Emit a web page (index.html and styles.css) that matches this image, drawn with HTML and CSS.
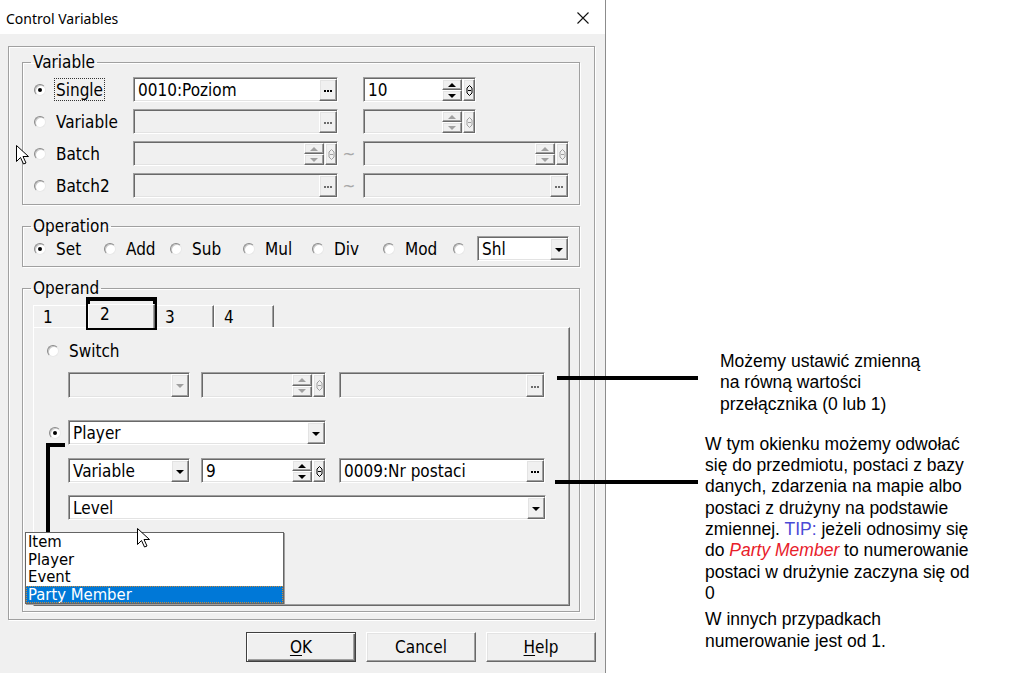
FILE: index.html
```html
<!DOCTYPE html>
<html lang="pl">
<head>
    <meta charset="UTF-8">
    <meta name="viewport" content="width=device-width, initial-scale=1.0">
    <title>Control Variables</title>
    <link rel="stylesheet" href="styles.css">
</head>
<body>
<div class="page">
    <div class="window">
        <div class="titlebar">
            <span class="title">Control Variables</span>
            <svg class="close" width="12" height="12" viewBox="0 0 12 12"><path d="M0.5 0.5L11.5 11.5M11.5 0.5L0.5 11.5" stroke="#111" stroke-width="1.1"/></svg>
        </div>

        <div class="client">
            <div class="frame">
                <!-- target variable -->
                <fieldset class="group group-var">
                    <legend>Variable</legend>
                    <div class="var-grid">
                        <div class="opt"><span class="radio on"></span><span class="focus">Single</span></div>
                        <div class="field"><span class="val">0010:Poziom</span><span class="dots"></span></div>
                        <span></span>
                        <div class="field w113"><span class="val">10</span><span class="spin"><i class="up"></i><i class="down"></i></span><span class="knob"><svg width="7" height="11" viewBox="0 0 7 11"><path d="M3.5 0.5L6 3V8L3.5 10.5L1 8V3Z" fill="none" stroke="currentColor"/><path d="M2 5.5H5" stroke="currentColor"/></svg></span></div>

                        <div class="opt"><span class="radio"></span>Variable</div>
                        <div class="field off"><span class="val"></span><span class="dots"></span></div>
                        <span></span>
                        <div class="field off w113"><span class="val"></span><span class="spin"><i class="up"></i><i class="down"></i></span><span class="knob"><svg width="7" height="11" viewBox="0 0 7 11"><path d="M3.5 0.5L6 3V8L3.5 10.5L1 8V3Z" fill="none" stroke="currentColor"/><path d="M2 5.5H5" stroke="currentColor"/></svg></span></div>

                        <div class="opt"><span class="radio"></span>Batch</div>
                        <div class="field off"><span class="val"></span><span class="spin"><i class="up"></i><i class="down"></i></span><span class="knob"><svg width="7" height="11" viewBox="0 0 7 11"><path d="M3.5 0.5L6 3V8L3.5 10.5L1 8V3Z" fill="none" stroke="currentColor"/><path d="M2 5.5H5" stroke="currentColor"/></svg></span></div>
                        <span class="tilde">~</span>
                        <div class="field off"><span class="val"></span><span class="spin"><i class="up"></i><i class="down"></i></span><span class="knob"><svg width="7" height="11" viewBox="0 0 7 11"><path d="M3.5 0.5L6 3V8L3.5 10.5L1 8V3Z" fill="none" stroke="currentColor"/><path d="M2 5.5H5" stroke="currentColor"/></svg></span></div>

                        <div class="opt"><span class="radio"></span>Batch2</div>
                        <div class="field off"><span class="val"></span><span class="dots"></span></div>
                        <span class="tilde">~</span>
                        <div class="field off"><span class="val"></span><span class="dots"></span></div>
                    </div>
                </fieldset>

                <!-- operation -->
                <fieldset class="group group-op">
                    <legend>Operation</legend>
                    <div class="op-grid">
                        <div class="opt"><span class="radio on"></span>Set</div>
                        <div class="opt"><span class="radio"></span>Add</div>
                        <div class="opt"><span class="radio"></span>Sub</div>
                        <div class="opt"><span class="radio"></span>Mul</div>
                        <div class="opt"><span class="radio"></span>Div</div>
                        <div class="opt"><span class="radio"></span>Mod</div>
                        <div class="opt"><span class="radio"></span></div>
                        <div class="field combo"><span class="val">Shl</span><span class="drop"></span></div>
                    </div>
                </fieldset>

                <!-- operand -->
                <fieldset class="group group-operand">
                    <legend>Operand</legend>
                    <div class="tabs">
                        <span class="tab t1">1</span>
                        <span class="tab t2 active">2</span>
                        <span class="tab t3">3</span>
                        <span class="tab t4">4</span>
                    </div>
                    <div class="panel">
                        <div class="opt sw"><span class="radio"></span>Switch</div>
                        <div class="row row-switch">
                            <div class="field off combo w122"><span class="val"></span><span class="drop"></span></div>
                            <div class="field off w125 gap11"><span class="val"></span><span class="spin"><i class="up"></i><i class="down"></i></span><span class="knob"><svg width="7" height="11" viewBox="0 0 7 11"><path d="M3.5 0.5L6 3V8L3.5 10.5L1 8V3Z" fill="none" stroke="currentColor"/><path d="M2 5.5H5" stroke="currentColor"/></svg></span></div>
                            <div class="field off w206 gap13"><span class="val"></span><span class="dots"></span></div>
                        </div>
                        <div class="row row-player">
                            <span class="radio on"></span>
                            <div class="field combo w258"><span class="val">Player</span><span class="drop"></span></div>
                        </div>
                        <div class="row row-target">
                            <div class="field combo w122"><span class="val">Variable</span><span class="drop"></span></div>
                            <div class="field w125 gap11"><span class="val">9</span><span class="spin"><i class="up"></i><i class="down"></i></span><span class="knob"><svg width="7" height="11" viewBox="0 0 7 11"><path d="M3.5 0.5L6 3V8L3.5 10.5L1 8V3Z" fill="none" stroke="currentColor"/><path d="M2 5.5H5" stroke="currentColor"/></svg></span></div>
                            <div class="field w206 gap13"><span class="val">0009:Nr postaci</span><span class="dots"></span></div>
                        </div>
                        <div class="row row-level">
                            <div class="field combo w478"><span class="val">Level</span><span class="drop"></span></div>
                        </div>
                    </div>
                </fieldset>
            </div>

            <div class="buttons">
                <button class="btn default"><u>O</u>K</button>
                <button class="btn">Cancel</button>
                <button class="btn"><u>H</u>elp</button>
            </div>
        </div>

        <!-- open list of the Player combo -->
        <ul class="droplist">
            <li>Item</li>
            <li>Player</li>
            <li>Event</li>
            <li class="sel">Party Member</li>
        </ul>
    </div>

    <div class="notes">
        <p class="note note-switch">Możemy ustawić zmienną<br>na równą wartości<br>przełącznika (0 lub 1)</p>
        <p class="note note-target">W tym okienku możemy odwołać<br>się do przedmiotu, postaci z bazy<br>danych, zdarzenia na mapie albo<br>postaci z drużyny na podstawie<br>zmiennej. <span class="tip">TIP:</span> jeżeli odnosimy się<br>do <em class="hl">Party Member</em> to numerowanie<br>postaci w drużynie zaczyna się od<br>0</p>
        <p class="note note-rest">W innych przypadkach<br>numerowanie jest od 1.</p>
    </div>

    <!-- pointer lines -->
    <span class="mark mark-tab"></span>
    <span class="line line-switch"></span>
    <span class="line line-target"></span>
    <span class="line line-down"></span>
    <span class="line line-stub"></span>

    <svg class="cursor cur-a" width="13" height="20" viewBox="0 0 13 20"><path d="M0.5 0.5V16.5L4.5 12.5L7.5 19L10 18L7 11.5H12.5Z" fill="#fff" stroke="#000"/></svg>
    <svg class="cursor cur-b" width="13" height="20" viewBox="0 0 13 20"><path d="M0.5 0.5V16.5L4.5 12.5L7.5 19L10 18L7 11.5H12.5Z" fill="#fff" stroke="#000"/></svg>
</div>
</body>
</html>
```

FILE: styles.css
```css
* {
    box-sizing: border-box;
}

body {
    margin: 0;
    background: #fff;
    font-family: "DejaVu Sans Condensed", "DejaVu Sans", sans-serif;
    font-stretch: condensed;
    color: #000;
}

.page {
    position: relative;
    width: 1017px;
    height: 673px;
    display: flex;
    overflow: hidden;
}

/* dialog window */
.window {
    position: relative;
    width: 606px;
    height: 673px;
    flex: none;
    background: #f0f0f0;
    border-right: 1px solid #8c8c8c;
    font-size: 17px;
    display: flex;
    flex-direction: column;
}

.titlebar {
    height: 34px;
    background: #fff;
    display: flex;
    align-items: center;
    justify-content: space-between;
    padding: 2px 16px 0 6px;
}

.title {
    font-family: "Noto Sans", sans-serif;
    font-stretch: normal;
    font-size: 14px;
}

.frame {
    margin: 12px 10px 0 8px;
    height: 574px;
    border: 1px solid #a0a0a0;
    box-shadow: inset 1px 1px 0 #fff, 1px 1px 0 #fff;
    padding: 6px 14px 0 13px;
}

.group {
    margin: 0;
    padding: 0;
    min-width: 0;
    border: 1px solid #a0a0a0;
    box-shadow: inset 1px 1px 0 #fff, 1px 1px 0 #fff;
}

.group legend {
    margin-left: 8px;
    padding: 0 2px;
    line-height: 18px;
}

.group-var {
    padding: 6px 0 6px 0;
}

.group-op {
    margin-top: 12px;
    padding: 1px 0 5px 0;
}

.group-operand {
    margin-top: 12px;
    padding: 8px 0 5px 0;
}

.var-grid {
    display: grid;
    grid-template-columns: 99px 205px 25px 206px;
    grid-auto-rows: 25px;
    row-gap: 7px;
    padding-left: 11px;
}

.op-grid {
    display: grid;
    grid-template-columns: 70px 66px 73px 69px 71px 70px 24px 92px;
    height: 25px;
    padding-left: 11px;
}

/* radio option */
.opt {
    display: flex;
    align-items: center;
    white-space: nowrap;
}

.radio {
    width: 12px;
    height: 12px;
    flex: none;
    margin-right: 10px;
    border-radius: 50%;
    background: #fff;
    border: 1px solid;
    border-color: #8a8a8a #e8e8e8 #e8e8e8 #8a8a8a;
    box-shadow: inset 1px 1px 0 #c8c8c8;
    display: flex;
    align-items: center;
    justify-content: center;
}

.radio.on::before {
    content: "";
    width: 4px;
    height: 4px;
    border-radius: 50%;
    background: #000;
}

.focus {
    outline: 1px dotted #333;
    outline-offset: 0;
    padding: 2px 1px 1px;
    margin-left: -1px;
    line-height: 18px;
}

.tilde {
    color: #a8a8a8;
    display: flex;
    align-items: center;
    justify-content: center;
    padding-right: 3px;
}

/* sunken edit field */
.field {
    height: 25px;
    display: flex;
    background: #fff;
    border: 1px solid;
    border-color: #a0a0a0 #fff #fff #a0a0a0;
    box-shadow: inset 1px 1px 0 #696969, inset -1px -1px 0 #e3e3e3;
    padding: 1px 0 0 1px;
}

.field.off {
    background: #f0f0f0;
}

.field .val {
    flex: 1;
    padding-left: 3px;
    line-height: 22px;
    white-space: nowrap;
    overflow: hidden;
}

.w113 { width: 113px; }
.w122 { width: 122px; }
.w125 { width: 125px; }
.w206 { width: 206px; }
.w258 { width: 258px; }
.w478 { width: 478px; }
.gap11 { margin-left: 11px; }
.gap13 { margin-left: 13px; }

/* small raised buttons inside fields */
.dots,
.drop,
.spin i,
.knob {
    background: #f0f0f0;
    border: 1px solid;
    border-color: #fff #696969 #696969 #fff;
    box-shadow: inset -1px -1px 0 #a0a0a0, inset 1px 1px 0 #e3e3e3;
    display: flex;
    align-items: center;
    justify-content: center;
    color: #000;
}

.off .dots,
.off .drop,
.off .spin i,
.off .knob {
    color: #a0a0a0;
}

.off .dots {
    color: #6d6d6d;
}

.dots {
    width: 18px;
}

.dots::before {
    content: "";
    width: 2px;
    height: 2px;
    background: currentColor;
    box-shadow: -3px 0 0 currentColor, 3px 0 0 currentColor;
    margin-top: 2px;
}

.drop {
    width: 18px;
}

.drop::before {
    content: "";
    border-left: 4px solid transparent;
    border-right: 4px solid transparent;
    border-top: 4px solid currentColor;
    margin-top: 1px;
}

.spin {
    width: 20px;
    display: flex;
    flex-direction: column;
}

.spin i {
    flex: 1;
}

.spin .up::before {
    content: "";
    border-left: 4px solid transparent;
    border-right: 4px solid transparent;
    border-bottom: 4px solid currentColor;
}

.spin .down::before {
    content: "";
    border-left: 4px solid transparent;
    border-right: 4px solid transparent;
    border-top: 4px solid currentColor;
}

.knob {
    width: 12px;
    margin-left: 1px;
}

/* operand tabs */
.tabs {
    display: flex;
    align-items: flex-end;
    margin-left: 10px;
    height: 22px;
}

.tab {
    height: 22px;
    padding: 2px 0 0 9px;
    line-height: 18px;
    border: 1px solid;
    border-bottom: none;
    border-color: #fff #696969 #fff #fff;
    box-shadow: inset -1px 0 0 #a0a0a0;
}

.t1 { width: 55px; }
.t2 { width: 67px; }
.t3 { width: 59px; }
.t4 { width: 60px; }

.tab.active {
    height: 24px;
    margin-bottom: -1px;
    padding: 0 0 0 11px;
    position: relative;
    z-index: 1;
    background: #f0f0f0;
}

.panel {
    margin: 0 9px 0 10px;
    height: 279px;
    border: 1px solid;
    border-color: #fff #696969 #696969 #fff;
    box-shadow: inset -1px -1px 0 #a0a0a0;
    padding: 11px 0 0 13px;
}

.sw {
    height: 24px;
}

.row {
    display: flex;
}

.row-switch {
    margin: 9px 0 0 21px;
}

.row-switch .field {
    height: 26px;
}

.row-player {
    margin-top: 22px;
    align-items: center;
    padding-left: 2px;
}

.row-player .radio {
    margin-right: 7px;
}

.row-target {
    margin: 13px 0 0 21px;
}

.row-level {
    margin: 12px 0 0 21px;
}

/* dialog buttons */
.buttons {
    display: flex;
    justify-content: flex-end;
    gap: 10px;
    margin-top: 12px;
    padding-right: 9px;
}

.btn {
    width: 110px;
    height: 30px;
    font: inherit;
    font-size: 17px;
    color: #000;
    background: #f0f0f0;
    border: 1px solid;
    border-color: #fff #696969 #696969 #fff;
    box-shadow: inset -1px -1px 0 #a0a0a0, inset 1px 1px 0 #e3e3e3;
    padding: 0;
}

.btn.default {
    border-color: #404040;
    box-shadow: inset 1px 1px 0 #fff, inset -1px -1px 0 #696969, inset -2px -2px 0 #a0a0a0;
}

.btn u {
    text-decoration-thickness: 1px;
    text-underline-offset: 2px;
}

/* open combo list */
.droplist {
    position: absolute;
    left: 25px;
    top: 532px;
    width: 259px;
    margin: 0;
    padding: 0;
    list-style: none;
    background: #fff;
    border: 1px solid #646464;
    box-shadow: 1px 1px 0 #a0a0a0;
    font-size: 16.5px;
}

.droplist li {
    height: 17.5px;
    line-height: 17.5px;
    padding-left: 2px;
}

.droplist .sel {
    background: #0078d7;
    color: #fff;
    outline: 1px dotted #c88a3c;
    outline-offset: -1px;
}

/* notes beside the dialog */
.notes {
    flex: 1;
    font-family: "Liberation Sans", Arial, sans-serif;
    font-stretch: normal;
    font-size: 17.5px;
    line-height: 21.3px;
}

.note {
    margin: 0;
}

.note-switch {
    margin: 351px 0 0 114px;
}

.note-target {
    margin: 19px 0 0 99px;
}

.note-rest {
    margin: 5px 0 0 99px;
}

.tip {
    color: #4b4bd6;
}

.hl {
    color: #e8202a;
}

/* black pointer lines and marks */
.line,
.mark {
    position: absolute;
}

.line {
    background: #000;
}

.line-switch {
    left: 557px;
    top: 376px;
    width: 141px;
    height: 4px;
}

.line-target {
    left: 555px;
    top: 480px;
    width: 143px;
    height: 4px;
}

.line-down {
    left: 46px;
    top: 443px;
    width: 4px;
    height: 89px;
}

.line-stub {
    left: 46px;
    top: 443px;
    width: 19px;
    height: 4px;
}

.mark-tab {
    left: 86px;
    top: 297px;
    width: 71px;
    height: 33px;
    border: 4px solid #000;
}

.cursor {
    position: absolute;
}

.cur-a {
    left: 16px;
    top: 145px;
}

.cur-b {
    left: 137px;
    top: 528px;
}
```
